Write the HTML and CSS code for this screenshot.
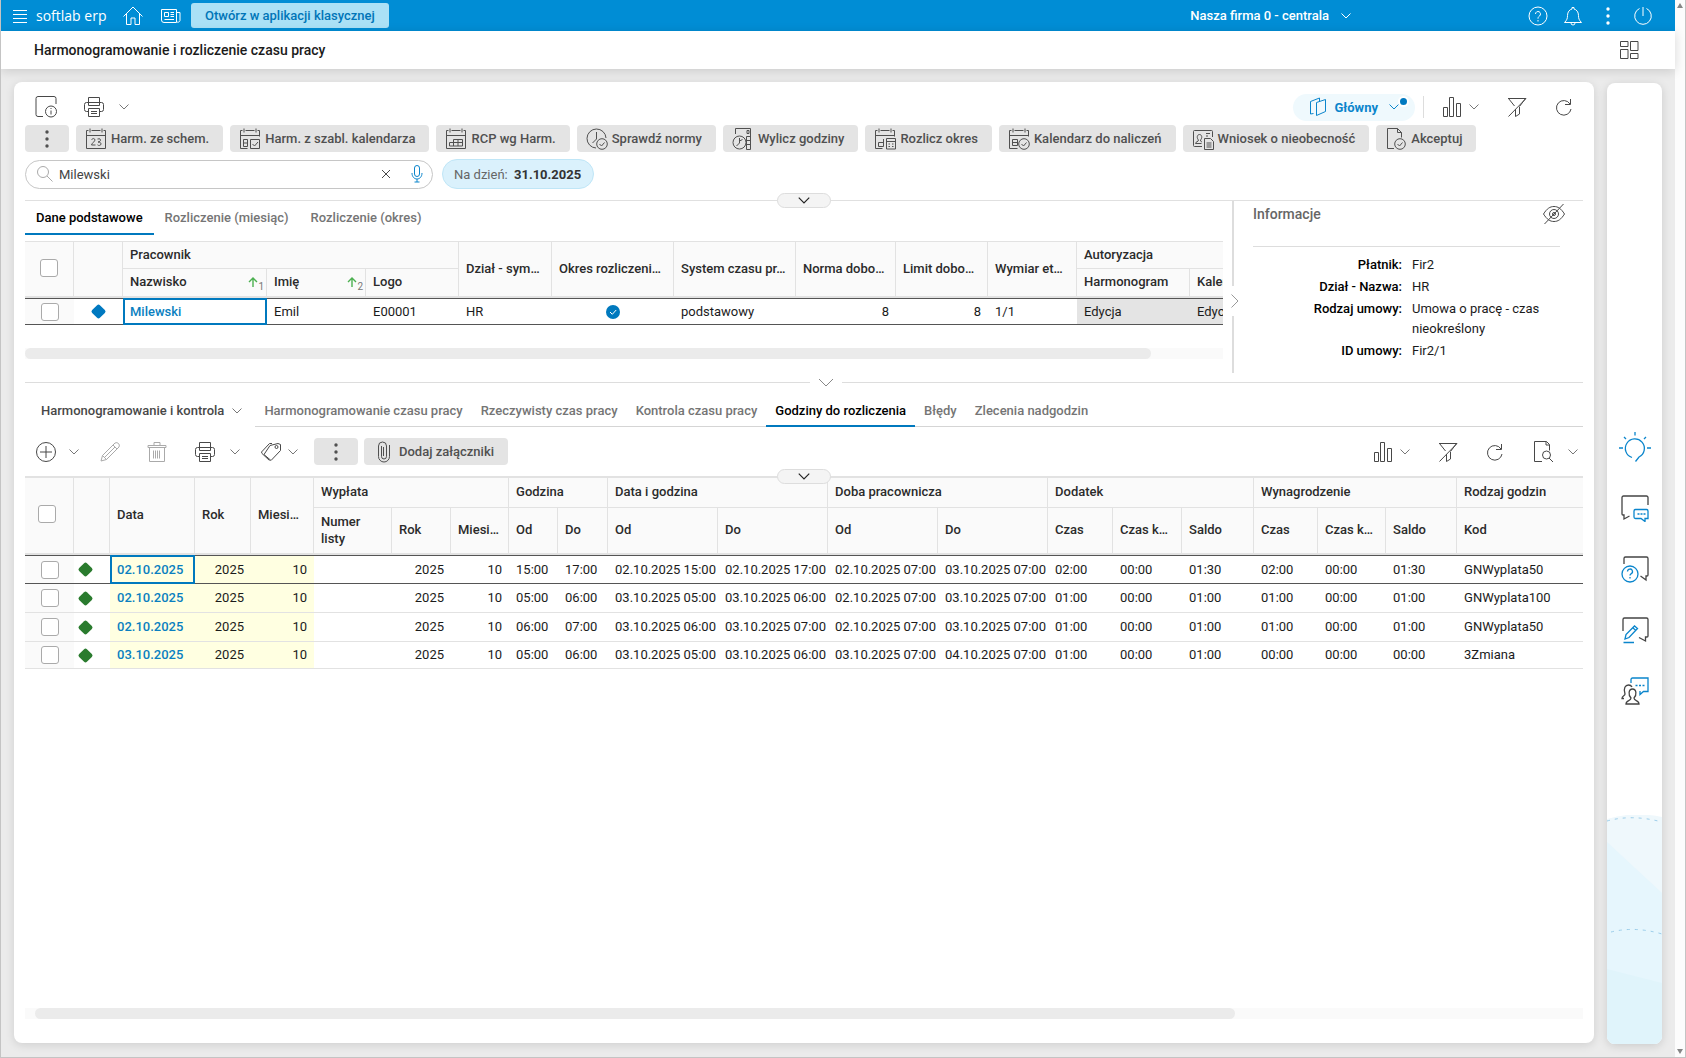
FILE: index.html
```html
<!DOCTYPE html>
<html lang="pl">
<head>
  <meta charset="UTF-8">
  <meta name="viewport" content="width=device-width, initial-scale=1.0">
  <title>Harmonogramowanie i rozliczenie czasu pracy</title>
  <link rel="stylesheet" href="styles.css">
</head>
<body>
  <svg class="sprite" aria-hidden="true">
    <symbol id="chevron" viewBox="0 0 10 6"><path d="M.5 .5 5 5 9.5 .5"/></symbol>
    <symbol id="printer" viewBox="0 0 22 22"><path d="M5.5 6.5v-5h11v5M5.5 15.5h-2a2 2 0 0 1-2-2v-5a2 2 0 0 1 2-2h15a2 2 0 0 1 2 2v5a2 2 0 0 1-2 2h-2M5.5 6.5v3h11v-3M5.5 12.5h11v8h-11zM8 15.5h6M8 17.5h6"/></symbol>
    <symbol id="bars" viewBox="0 0 20 20"><path d="M1.5 10.5h4v9h-4zM7.5 .5h4v19h-4zM14.5 6.5h4v13h-4z"/></symbol>
    <symbol id="filter-off" viewBox="0 0 20 20"><path d="M1 1.5h18L1.5 19.5M1.5 1.5l6 7.5M18.5 1.5l-6 8M8.5 12v7.5l4-2.5v-7"/></symbol>
    <symbol id="refresh" viewBox="0 0 18 18"><path d="M15.5 1v5.5H10M15 6A7.3 7.3 0 1 0 16 11"/></symbol>
    <symbol id="cal" viewBox="0 0 22 22"><path d="M1.5 7.5h19M3.5 2.5h-2v18M6.5 2.5h9M18.5 2.5h2v6M5 .5v4M17 .5v4"/></symbol>
    <symbol id="dots" viewBox="0 0 4 18"><circle cx="2" cy="2" r="1.7"/><circle cx="2" cy="9" r="1.7"/><circle cx="2" cy="16" r="1.7"/></symbol>
  </svg>

  <div class="app">
    <header class="topbar">
      <button class="bare" aria-label="Menu"><svg class="i-menu" viewBox="0 0 14 14"><path d="M0 1.5h14M0 5.5h14M0 9.5h14M0 13.5h14"/></svg></button>
      <a class="brand" href="#">softlab erp</a>
      <a class="home" href="#" aria-label="Start"><svg class="i20" viewBox="0 0 20 20"><path d="M.5 10.5 10 1l9.5 9.5M3.5 8v10.5H8v-6.5h4v6.5h4.5V8"/></svg></a>
      <a class="news" href="#" aria-label="Aktualności"><svg class="i20" viewBox="0 0 20 20"><path d="M.5 3.5h15v13H3a2.5 2.5 0 0 1-2.5-2.5zM15.5 6.5h3.5v8a2 2 0 0 1-3.5 1M3.5 6.5h4v4h-4zM9.5 6.5H13M9.5 8.5H13M9.5 10.5H13M3.5 13.5H13"/></svg></a>
      <button class="classic">Otwórz w aplikacji klasycznej</button>
      <button class="bare company">Nasza firma 0 - centrala <svg class="chev"><use href="#chevron"/></svg></button>
      <div class="topbar-icons">
        <button class="bare" aria-label="Pomoc"><svg class="i20" viewBox="0 0 20 20"><circle cx="10" cy="10" r="9"/><path d="M7.5 8a2.5 2.5 0 1 1 4 2c-1 .8-1.5 1.2-1.5 2.7M10 14v1.5"/></svg></button>
        <button class="bare" aria-label="Powiadomienia"><svg class="i20" viewBox="0 0 20 20"><path d="M1.5 16.5h17c-2.500-2.500-3-4-3-7C15.5 6 13.5 3.5 11 3V1.5H9V3C6.5 3.5 4.5 6 4.5 9.5c0 3-.5 4.500-3 7zM8 17a2 2 0 0 0 4 0"/></svg></button>
        <button class="bare" aria-label="Więcej"><svg class="i-dots"><use href="#dots"/></svg></button>
        <button class="bare" aria-label="Wyloguj"><svg class="i20" viewBox="0 0 20 20"><path d="M10 1v9M6.5 2.5a8.3 8.3 0 1 0 7 0"/></svg></button>
      </div>
    </header>

    <div class="titlebar">
      <h1>Harmonogramowanie i rozliczenie czasu pracy</h1>
      <button class="bare" aria-label="Układ"><svg class="i20" viewBox="0 0 20 20"><path d="M1.5 1.5h7.5v5H1.5zM1.5 9.5h7.5v9H1.5zM11.5 1.5h7.5v9h-7.5zM11.5 13.5h7.5v5h-7.5z"/></svg></button>
    </div>

    <div class="workspace">
      <main class="panel">
        <div class="toolbar main-tools">
          <button class="bare" aria-label="Informacje"><svg class="i22" viewBox="0 0 22 22"><path d="M8 20.5H3a2 2 0 0 1-2-2v-16a2 2 0 0 1 2-2h16a2 2 0 0 1 2 2V8"/><circle cx="16" cy="15.5" r="5.5"/><path d="M16 14.5v4M16 12v1"/></svg></button>
          <button class="bare split" aria-label="Drukuj"><svg class="i22"><use href="#printer"/></svg><svg class="chev"><use href="#chevron"/></svg></button>
          <div class="tools-right">
            <button class="view-pill"><svg class="i-map" viewBox="0 0 18 20"><path d="M7.5 5.5 16.5 2.5v12l-9 4zM4.5 16.5l-3 .5V4.5L10.5 1v3"/></svg>Główny<svg class="chev"><use href="#chevron"/></svg><span class="badge"></span></button>
            <span class="vline"></span>
            <button class="bare bars" aria-label="Wykres"><svg class="i20"><use href="#bars"/></svg><svg class="chev"><use href="#chevron"/></svg></button>
            <button class="bare" aria-label="Wyczyść filtr"><svg class="i20"><use href="#filter-off"/></svg></button>
            <button class="bare" aria-label="Odśwież"><svg class="i18"><use href="#refresh"/></svg></button>
          </div>
        </div>

        <div class="actions">
          <button class="action more" aria-label="Więcej"><svg class="i-dots"><use href="#dots"/></svg></button>
          <button class="action"><svg class="i22" viewBox="0 0 22 22"><use href="#cal"/><path d="M1.5 20.5h19v-13"/><path d="M6.5 11.5q2-2 3.5 0c.5 1.5-3.5 4-3.5 5.5H10.5M12.5 11q3-1 3 1c0 1-1 2-2.5 2 2 0 3 .7 3 2 0 1.5-2.5 2-3.5 .8"/></svg>Harm. ze schem.</button>
          <button class="action"><svg class="i22" viewBox="0 0 22 22"><use href="#cal"/><path d="M1.5 20.5h7M4.5 11.5h4v7h-4zM4.5 15h4M11.5 11.5h9v9h-9zM13.5 16l2 2 3.5-4"/></svg>Harm. z szabl. kalendarza</button>
          <button class="action"><svg class="i22" viewBox="0 0 22 22"><use href="#cal"/><path d="M1.5 20.5h19v-13M4.5 14.5h13v3.5h-13zM8.5 11.5v6.5M8.5 11.5h9v6.5M13 11.5v6.5"/></svg>RCP wg Harm.</button>
          <button class="action"><svg class="i22" viewBox="0 0 22 22"><path d="M10 20A9.5 9.5 0 1 1 20 10M10.5 4v7l-4 4"/><circle cx="16" cy="16" r="5.3"/><path d="m13.5 16 2 2 3-3.5"/></svg>Sprawdź normy</button>
          <button class="action"><svg class="i22" viewBox="0 0 22 22"><path d="M3.5 6V.5h15v21h-4M14.5 8.5v13M14.5 8.5h4M14.5 12.5h4M14.5 16.5h4M15 2.5h2v3h-2z"/><circle cx="7.5" cy="14.5" r="6.5"/><path d="M7.5 10v5l-3 3M7.5 13l3-1.5"/></svg>Wylicz godziny</button>
          <button class="action"><svg class="i22" viewBox="0 0 22 22"><use href="#cal"/><path d="M1.5 20.5h7M9.5 11v7.5h-5v-4h5M12.5 10.5h9v10.5h-9zM12.5 13.5h9M14.5 16h1.5M18 16h1.5M14.5 18.5h1.5M18 18.5h1.5"/></svg>Rozlicz okres</button>
          <button class="action"><svg class="i22" viewBox="0 0 22 22"><use href="#cal"/><path d="M1.5 20.5h8M4.5 11.5h5v6h-5zM4.5 14.5h5"/><circle cx="16" cy="16" r="5.3"/><path d="m13.5 16 2 2 3-3.5"/></svg>Kalendarz do naliczeń</button>
          <button class="action"><svg class="i22" viewBox="0 0 22 22"><path d="M10 18.5H2.5a1 1 0 0 1-1-1v-14a1 1 0 0 1 1-1h17a1 1 0 0 1 1 1V9M14 5.5h4M14 8h2M3.5 15.5c0-2 3-1.5 3-3.5-2-2-1.500-5.500 1-5.500s3 3.500 1 5.500c0 2 1 1.500 1.500 2M3.5 15.5h6M12.5 10.5h6l3 3v8h-9zM14.5 15h5M14.5 17h5M14.5 19h5"/></svg>Wniosek o nieobecność</button>
          <button class="action"><svg class="i22" viewBox="0 0 22 22"><path d="M9 20.5H2.5V.5h10l4 4v5M12.5 .5v4h4"/><circle cx="15" cy="16" r="5.3"/><path d="m12.5 16 2 2 3-3.5"/></svg>Akceptuj</button>
        </div>

        <div class="filters">
          <div class="search">
            <svg class="i18 lens" viewBox="0 0 18 18"><circle cx="7" cy="7" r="5.5"/><path d="m11 11 5.5 5.5"/></svg>
            <input type="text" value="Milewski" aria-label="Szukaj">
            <button class="bare" aria-label="Wyczyść"><svg class="i10" viewBox="0 0 10 10"><path d="m1 1 8 8M9 1 1 9"/></svg></button>
            <button class="bare mic" aria-label="Dyktuj"><svg class="i-mic" viewBox="0 0 12 18"><rect x="3.5" y=".5" width="5" height="11" rx="2.5"/><path d="M1 8c0 8 10 8 10 0M6 14v3M3.5 17h5"/></svg></button>
          </div>
          <button class="date-chip">Na dzień: <b>31.10.2025</b></button>
        </div>

        <div class="handle-line"><button class="handle" aria-label="Zwiń"><svg class="chev"><use href="#chevron"/></svg></button></div>

        <section class="upper">
          <div class="upper-left">
            <nav class="tabs">
              <a class="active" href="#">Dane podstawowe</a>
              <a href="#">Rozliczenie (miesiąc)</a>
              <a href="#">Rozliczenie (okres)</a>
            </nav>
            <div class="grid-wrap">
              <table class="grid people">
                <colgroup>
                  <col class="w49"><col class="w49"><col class="w144"><col class="w99"><col class="w93"><col class="w93"><col class="w122"><col class="w122"><col class="w100"><col class="w92"><col class="w89"><col class="w113"><col>
                </colgroup>
                <thead>
                  <tr>
                    <th rowspan="2" class="check"><input type="checkbox" aria-label="Zaznacz wszystkie"></th>
                    <th rowspan="2"></th>
                    <th colspan="3">Pracownik</th>
                    <th rowspan="2">Dział - sym…</th>
                    <th rowspan="2">Okres rozliczeni…</th>
                    <th rowspan="2">System czasu pr…</th>
                    <th rowspan="2">Norma dobo…</th>
                    <th rowspan="2">Limit dobo…</th>
                    <th rowspan="2">Wymiar et…</th>
                    <th colspan="2">Autoryzacja</th>
                  </tr>
                  <tr>
                    <th><span class="sorted">Nazwisko <span class="sort"><svg class="i-up" viewBox="0 0 10 10"><path d="M5 10V1M1 5l4-4 4 4"/></svg><sub>1</sub></span></span></th>
                    <th><span class="sorted">Imię <span class="sort"><svg class="i-up" viewBox="0 0 10 10"><path d="M5 10V1M1 5l4-4 4 4"/></svg><sub>2</sub></span></span></th>
                    <th>Logo</th>
                    <th>Harmonogram</th>
                    <th class="cut">Kalendarz</th>
                  </tr>
                </thead>
                <tbody>
                  <tr class="current">
                    <td class="check"><input type="checkbox" aria-label="Milewski"></td>
                    <td class="mark"><i class="diamond blue"></i></td>
                    <td class="key focus">Milewski</td>
                    <td>Emil</td>
                    <td>E00001</td>
                    <td>HR</td>
                    <td class="mark"><svg class="i-ok" viewBox="0 0 14 14"><circle cx="7" cy="7" r="7"/><path d="m4 7 2.3 2.3L10.2 5"/></svg></td>
                    <td>podstawowy</td>
                    <td class="num">8</td>
                    <td class="num">8</td>
                    <td>1/1</td>
                    <td class="locked">Edycja</td>
                    <td class="locked cut">Edycja</td>
                  </tr>
                </tbody>
              </table>
            </div>
            <div class="scroll"><div class="thumb thumb-upper"></div></div>
          </div>

          <div class="vsplit"><span class="above"></span><svg viewBox="0 0 8 14"><path d="m.5 .5 6.5 6.5-6.5 6.5"/></svg><span class="below"></span></div>

          <aside class="info">
            <div class="info-head">
              <h2>Informacje</h2>
              <button class="bare" aria-label="Ukryj"><svg class="i22" viewBox="0 0 22 22"><path d="M.5 11C4 5.5 7 3.5 11 3.5s7 2 10.5 7.5C18 16.5 15 18.5 11 18.5S4 16.5 .5 11zM1.5 21 20.5 1"/><circle cx="11" cy="11" r="4.5"/><circle cx="11" cy="11" r="1.5"/></svg></button>
            </div>
            <dl>
              <dt>Płatnik:</dt><dd>Fir2</dd>
              <dt>Dział - Nazwa:</dt><dd>HR</dd>
              <dt>Rodzaj umowy:</dt><dd>Umowa o pracę - czas nieokreślony</dd>
              <dt>ID umowy:</dt><dd>Fir2/1</dd>
            </dl>
          </aside>
        </section>

        <div class="hsplit"><span class="before"></span><svg viewBox="0 0 16 9"><path d="m1 1 7 7 7-7"/></svg><span class="after"></span></div>

        <div class="lower-nav">
          <button class="bare group">Harmonogramowanie i kontrola <svg class="chev"><use href="#chevron"/></svg></button>
          <nav class="tabs lower-tabs">
            <a href="#">Harmonogramowanie czasu pracy</a>
            <a href="#">Rzeczywisty czas pracy</a>
            <a href="#">Kontrola czasu pracy</a>
            <a class="active" href="#">Godziny do rozliczenia</a>
            <a href="#">Błędy</a>
            <a href="#">Zlecenia nadgodzin</a>
          </nav>
        </div>

        <div class="toolbar lower-tools">
          <button class="bare add" aria-label="Dodaj"><svg class="i22" viewBox="0 0 22 22"><circle cx="11" cy="11" r="9.5"/><path d="M11 5v12M5 11h12"/></svg><svg class="chev"><use href="#chevron"/></svg></button>
          <button class="bare off" aria-label="Edytuj" disabled><svg class="i20" viewBox="0 0 20 20"><path d="M1 19l1.5-5.5L15 1q2-1 3.5 .5T19 5L6.5 17.5zM2.5 13.5l4 4M13 3l4 4M4.5 15.5 15 5"/></svg></button>
          <button class="bare off" aria-label="Usuń" disabled><svg class="i22" viewBox="0 0 22 22"><path d="M2 4.5h18v2H2zM8 4.5v-3h6v3M3.5 6.5v14h15v-14M7.5 9.5v8M9.5 9.5v8M11.5 9.5v8M13.5 9.5v8"/></svg></button>
          <button class="bare split" aria-label="Drukuj"><svg class="i22"><use href="#printer"/></svg><svg class="chev"><use href="#chevron"/></svg></button>
          <button class="bare tag" aria-label="Etykiety"><svg class="i20" viewBox="0 0 20 20"><path d="M9 3.5 17 1.5l2.5 1v6L10 18.5 3 12.5zM11 1.5H8.5L.5 10l.5 1.5 7.5 7"/><circle cx="15.5" cy="5" r="1.5"/></svg><svg class="chev"><use href="#chevron"/></svg></button>
          <button class="action more" aria-label="Więcej"><svg class="i-dots"><use href="#dots"/></svg></button>
          <button class="action attach"><svg class="i-clip" viewBox="0 0 14 22"><path d="M4.5 5v10.5a2.5 2.5 0 0 0 5 0V5a4 4 0 0 0-4-4 4 4 0 0 0-4 4v10.5a5.5 5.5 0 0 0 11 0V4M6.5 6v9"/></svg>Dodaj załączniki</button>
          <div class="tools-right">
            <button class="bare bars" aria-label="Wykres"><svg class="i20"><use href="#bars"/></svg><svg class="chev"><use href="#chevron"/></svg></button>
            <button class="bare" aria-label="Wyczyść filtr"><svg class="i20"><use href="#filter-off"/></svg></button>
            <button class="bare" aria-label="Odśwież"><svg class="i18"><use href="#refresh"/></svg></button>
            <button class="bare split" aria-label="Podgląd"><svg class="i22" viewBox="0 0 22 22"><path d="M10 20.5H2.5V.5h12l3 3v6M14 .5v3.5h3.5"/><circle cx="14.5" cy="14" r="4"/><path d="m17 17 4 4"/></svg><svg class="chev"><use href="#chevron"/></svg></button>
          </div>
        </div>

        <div class="grid-wrap hours-wrap">
          <button class="handle" aria-label="Zwiń"><svg class="chev"><use href="#chevron"/></svg></button>
          <table class="grid hours">
            <colgroup>
              <col class="w49"><col class="w36"><col class="w85"><col class="w56"><col class="w63"><col class="w78"><col class="w59"><col class="w58"><col class="w49"><col class="w50"><col class="w110"><col class="w110"><col class="w110"><col class="w110"><col class="w65"><col class="w69"><col class="w72"><col class="w64"><col class="w68"><col class="w71"><col>
            </colgroup>
            <thead>
              <tr>
                <th rowspan="2" class="check"><input type="checkbox" aria-label="Zaznacz wszystkie"></th>
                <th rowspan="2"></th>
                <th rowspan="2">Data</th>
                <th rowspan="2">Rok</th>
                <th rowspan="2">Miesi…</th>
                <th colspan="3">Wypłata</th>
                <th colspan="2">Godzina</th>
                <th colspan="2">Data i godzina</th>
                <th colspan="2">Doba pracownicza</th>
                <th colspan="3">Dodatek</th>
                <th colspan="3">Wynagrodzenie</th>
                <th>Rodzaj godzin</th>
              </tr>
              <tr>
                <th class="wrap">Numer listy</th><th>Rok</th><th>Miesi…</th>
                <th>Od</th><th>Do</th><th>Od</th><th>Do</th><th>Od</th><th>Do</th>
                <th>Czas</th><th>Czas k…</th><th>Saldo</th>
                <th>Czas</th><th>Czas k…</th><th>Saldo</th>
                <th>Kod</th>
              </tr>
            </thead>
            <tbody>
              <tr class="current">
                <td class="check"><input type="checkbox" aria-label="Wiersz 1"></td><td class="mark"><i class="diamond"></i></td>
                <td class="key yellow focus">02.10.2025</td><td class="num yellow">2025</td><td class="num yellow">10</td>
                <td></td><td class="num">2025</td><td class="num">10</td><td>15:00</td><td>17:00</td>
                <td>02.10.2025 15:00</td><td>02.10.2025 17:00</td><td>02.10.2025 07:00</td><td>03.10.2025 07:00</td>
                <td>02:00</td><td>00:00</td><td>01:30</td><td>02:00</td><td>00:00</td><td>01:30</td><td>GNWyplata50</td>
              </tr>
              <tr>
                <td class="check"><input type="checkbox" aria-label="Wiersz 2"></td><td class="mark"><i class="diamond"></i></td>
                <td class="key yellow">02.10.2025</td><td class="num yellow">2025</td><td class="num yellow">10</td>
                <td></td><td class="num">2025</td><td class="num">10</td><td>05:00</td><td>06:00</td>
                <td>03.10.2025 05:00</td><td>03.10.2025 06:00</td><td>02.10.2025 07:00</td><td>03.10.2025 07:00</td>
                <td>01:00</td><td>00:00</td><td>01:00</td><td>01:00</td><td>00:00</td><td>01:00</td><td>GNWyplata100</td>
              </tr>
              <tr>
                <td class="check"><input type="checkbox" aria-label="Wiersz 3"></td><td class="mark"><i class="diamond"></i></td>
                <td class="key yellow">02.10.2025</td><td class="num yellow">2025</td><td class="num yellow">10</td>
                <td></td><td class="num">2025</td><td class="num">10</td><td>06:00</td><td>07:00</td>
                <td>03.10.2025 06:00</td><td>03.10.2025 07:00</td><td>02.10.2025 07:00</td><td>03.10.2025 07:00</td>
                <td>01:00</td><td>00:00</td><td>01:00</td><td>01:00</td><td>00:00</td><td>01:00</td><td>GNWyplata50</td>
              </tr>
              <tr>
                <td class="check"><input type="checkbox" aria-label="Wiersz 4"></td><td class="mark"><i class="diamond"></i></td>
                <td class="key yellow">03.10.2025</td><td class="num yellow">2025</td><td class="num yellow">10</td>
                <td></td><td class="num">2025</td><td class="num">10</td><td>05:00</td><td>06:00</td>
                <td>03.10.2025 05:00</td><td>03.10.2025 06:00</td><td>03.10.2025 07:00</td><td>04.10.2025 07:00</td>
                <td>01:00</td><td>00:00</td><td>01:00</td><td>00:00</td><td>00:00</td><td>00:00</td><td>3Zmiana</td>
              </tr>
            </tbody>
          </table>
        </div>
        <div class="scroll bottom-scroll"><div class="thumb thumb-lower"></div></div>
      </main>

      <aside class="side">
        <nav class="side-icons">
          <a href="#" aria-label="Wskazówki"><svg class="i32 blue-line" viewBox="0 0 32 32"><path d="M13 26.5A9.5 9.5 0 1 1 20 26L16.5 30.5M16 1v3.5M5 6l2 2M27 6l-2 2M0 17h4M28 17h4"/></svg></a>
          <a href="#" aria-label="Czat"><svg class="i28" viewBox="0 0 28 28"><path d="M27 11V3.5a1.5 1.5 0 0 0-1.5-1.5H2.5A1.5 1.5 0 0 0 1 3.5V20a1 1 0 0 0 1 1h1v4l5.5-3"/><path class="blue-line" d="M14.5 15.5h11a1.5 1.5 0 0 1 1.5 1.5v7.5h-3v3l-4-3h-5.5a1.5 1.5 0 0 1-1.5-1.5v-6a1.5 1.5 0 0 1 1.5-1.5zM16.5 20h2M19.5 20h2M22.5 20h2"/></svg></a>
          <a href="#" aria-label="Pytania"><svg class="i28" viewBox="0 0 28 28"><path d="M3 9V3.5A1.5 1.5 0 0 1 4.5 2h21A1.5 1.5 0 0 1 27 3.5V20a1 1 0 0 1-1 1h-1v4l-5.5-4"/><g class="blue-line"><circle cx="9" cy="19" r="8"/><path d="M6.5 16.5a2.5 2.5 0 1 1 3.5 2.3c-.8 .4-1 .8-1 1.8M9 22v1.5"/></g></svg></a>
          <a href="#" aria-label="Notatki"><svg class="i28" viewBox="0 0 28 28"><path d="M2 15V3.5A1.5 1.5 0 0 1 3.5 2h22A1.5 1.5 0 0 1 27 3.5V20a1 1 0 0 1-1 1h-1.5v4L18 21.5"/><path class="blue-line" d="M2.5 26.5H13M4 23l1-4.5 8.5-8.5 3 2.5L8 21.5zM12 12l3 2.5"/></svg></a>
          <a href="#" aria-label="Zespół"><svg class="i28" viewBox="0 0 28 28"><path d="M5 27c0-4.5 5-2.5 5-6-3-3-2.5-9 1.5-9s4.5 6 1.5 9c0 3.5 5 1.5 5 6zM3 21.5H1c0-3 3-2.5 3-4.5-2-6 .5-9 3.5-9 2 0 3 1 3.5 2"/><path class="blue-line" d="M10 6V2.5A1.5 1.5 0 0 1 11.5 1h15.5v13.5h-4.5l-3.5 3v-3.5M14.5 8.5h2M18 8.5h2M21.5 8.5h2"/></svg></a>
        </nav>
        <svg class="side-art" viewBox="0 0 55 229" aria-hidden="true">
          <path fill="#eff8fc" d="M0 4Q27 -4 55 2V229H0z"/>
          <path fill="#e6f6fd" d="M0 27 55 78V229H0z"/>
          <path fill="#e0f4fb" d="M0 154 55 168V229H0z"/>
          <path class="dash" d="M0 6Q25 -1 55 7M4 117Q28 111 55 119"/>
        </svg>
      </aside>
    </div>
  </div>
  <div class="page-scroll"><i class="up"></i><i class="down"></i></div>
</body>
</html>
```

FILE: styles.css
```css
* {
  box-sizing: border-box;
}
body {
  margin: 0;
  display: flex;
  min-height: 100vh;
  background-color: #fcfcfc;
  border: 1px solid #c4c4c4;
  border-top: none;
  font-family: Roboto, "Liberation Sans", sans-serif;
  font-size: 13px;
  color: #1b1b1b;
}
a {
  color: inherit;
  text-decoration: none;
}
h1, h2, dl, dd {
  margin: 0;
}
button {
  font-family: inherit;
  font-size: 13px;
  cursor: pointer;
}
svg {
  display: block;
  flex: none;
  fill: none;
  stroke: currentColor;
  stroke-width: 1;
}
.sprite {
  position: absolute;
  width: 0;
  height: 0;
}
.bare {
  display: flex;
  align-items: center;
  padding: 0;
  border: none;
  background: none;
  color: #484848;
}
.i10 { width: 10px; height: 10px; }
.i18 { width: 18px; height: 18px; }
.i20 { width: 20px; height: 20px; }
.i22 { width: 22px; height: 22px; }
.i28 { width: 28px; height: 28px; }
.i32 { width: 32px; height: 32px; }
.chev { width: 10px; height: 6px; }
.i-dots {
  width: 4px;
  height: 18px;
  fill: currentColor;
  stroke: none;
}

/* frame */
.app {
  flex: 1;
  min-width: 0;
  display: flex;
  flex-direction: column;
  background-color: #ebebeb;
}
.page-scroll {
  display: flex;
  flex-direction: column;
  justify-content: space-between;
  align-items: center;
  width: 10px;
  padding: 3px 0;
}
.page-scroll i {
  border: 3px solid transparent;
}
.page-scroll .up {
  border-top: none;
  border-bottom: 5px solid #868686;
}
.page-scroll .down {
  border-bottom: none;
  border-top: 5px solid #868686;
}

/* top bar */
.topbar {
  display: flex;
  align-items: center;
  height: 31px;
  padding: 0 22px 0 12px;
  background-color: #008dd5;
  color: #fff;
}
.topbar .bare {
  color: #fff;
}
.i-menu {
  width: 14px;
  height: 14px;
}
.brand {
  margin-left: 9px;
  width: 87px;
  font-family: "Open Sans", sans-serif;
  font-size: 14px;
}
.news {
  margin: 0 10px 0 18px;
}
.classic {
  height: 25px;
  padding: 0 14px;
  border: none;
  border-radius: 3px;
  background-color: #abe1f6;
  color: #0075b8;
  font-weight: 500;
}
.company {
  margin-left: auto;
  gap: 12px;
  font-weight: 500;
}
.topbar-icons {
  display: flex;
  justify-content: space-between;
  align-items: center;
  width: 125px;
  margin-left: 177px;
}
.topbar-icons .bare {
  justify-content: center;
  width: 20px;
}

.titlebar {
  position: relative;
  display: flex;
  justify-content: space-between;
  align-items: center;
  height: 38px;
  padding: 0 36px 0 33px;
  background-color: #fff;
  box-shadow: 0 2px 10px rgba(0, 0, 0, 0.14);
}
.titlebar h1 {
  font-size: 14px;
  font-weight: 500;
}

/* workspace */
.workspace {
  flex: 1;
  display: flex;
  gap: 13px;
  padding: 13px 13px 14px;
}
.panel {
  flex: 1;
  min-width: 0;
  display: flex;
  flex-direction: column;
  padding: 11px;
  border-radius: 8px;
  background-color: #fff;
  box-shadow: 0 2px 10px rgba(0, 0, 0, 0.12);
}
.toolbar {
  display: flex;
  align-items: center;
}
.toolbar .chev, .group .chev {
  color: #777;
}
.main-tools {
  height: 28px;
  padding: 0 10px;
  gap: 26px;
}
.split {
  gap: 14px;
}
.bars {
  gap: 7px;
}
.tools-right {
  display: flex;
  align-items: center;
  gap: 28px;
  margin-left: auto;
}
.toolbar .view-pill {
  position: relative;
  display: flex;
  align-items: center;
  height: 27px;
  padding: 0 16px;
  gap: 7px;
  border: none;
  border-radius: 14px;
  background-color: #eff9fd;
  color: #0a85cc;
  font-weight: 700;
}
.toolbar .view-pill .chev {
  margin-left: 4px;
  color: #0a85cc;
}
.i-map {
  width: 18px;
  height: 20px;
}
.badge {
  position: absolute;
  top: 2px;
  right: 6px;
  width: 11px;
  height: 11px;
  border: 2px solid #fff;
  border-radius: 50%;
  background-color: #0079c0;
}
.vline {
  width: 1px;
  height: 22px;
  margin: 0 -10px 0 -20px;
  background-color: #ddd;
}

.actions {
  display: flex;
  gap: 7px;
  margin-top: 4px;
}
.action {
  display: flex;
  align-items: center;
  gap: 4px;
  height: 27px;
  padding: 0 14px 0 9px;
  border: none;
  border-radius: 4px;
  background-color: #e4e4e4;
  color: #505050;
  font-weight: 500;
  white-space: nowrap;
}
.more {
  justify-content: center;
  width: 44px;
  padding: 0;
}

.filters {
  display: flex;
  align-items: center;
  gap: 9px;
  margin-top: 7px;
}
.search {
  display: flex;
  align-items: center;
  width: 408px;
  height: 29px;
  padding: 0 9px 0 10px;
  border: 1px solid #c6c6c6;
  border-radius: 15px;
}
.lens {
  color: #aaa;
}
.search input {
  flex: 1;
  min-width: 0;
  padding: 0 0 0 5px;
  border: none;
  outline: none;
  background: none;
  color: #444;
  font-family: inherit;
  font-size: 13px;
}
.mic {
  margin-left: 20px;
  color: #0a85cc;
}
.i-mic {
  width: 12px;
  height: 18px;
}
.date-chip {
  height: 30px;
  padding: 0 12px 0 11px;
  border: 1px solid #bfe6f7;
  border-radius: 15px;
  background-color: #daf1fc;
  color: #666;
}
.date-chip b {
  margin-left: 3px;
  font-weight: 700;
  color: #333;
}

/* collapse handle over a line */
.handle-line {
  position: relative;
  margin-top: 11px;
  border-top: 1px solid #e0e0e0;
}
.handle {
  position: absolute;
  left: 50%;
  top: -8px;
  z-index: 1;
  display: flex;
  align-items: center;
  justify-content: center;
  width: 54px;
  height: 15px;
  padding: 0;
  transform: translateX(-50%);
  border: 1px solid #ddd;
  border-radius: 8px;
  background-color: #f4f4f4;
  color: #222;
}
.handle .chev {
  width: 12px;
  height: 7px;
}

/* upper part */
.upper {
  display: flex;
  height: 172px;
}
.upper-left {
  flex: 1;
  min-width: 0;
}
.tabs {
  display: flex;
  color: #757575;
  font-weight: 500;
}
.tabs a {
  height: 34px;
  padding: 0 11px;
  line-height: 33px;
  border-bottom: 2px solid transparent;
}
.tabs .active {
  border-bottom-color: #0079be;
  color: #000;
}
.grid-wrap {
  margin-top: 6px;
  overflow: hidden;
}

.grid {
  width: 100%;
  table-layout: fixed;
  border-spacing: 0;
  border-top: 1px solid #e2e2e2;
}
.grid th, .grid td {
  padding: 0 6px 0 7px;
  overflow: hidden;
  text-align: left;
  text-overflow: ellipsis;
  white-space: nowrap;
}
.grid th {
  padding: 0 4px 2px 7px;
  background-color: #fafafa;
  border-right: 1px solid #e2e2e2;
  border-bottom: 1px solid #e2e2e2;
  color: #2b2b2b;
  font-weight: 500;
}
.grid th:last-child {
  border-right: none;
}
.grid th[rowspan], .grid tr:nth-child(2) th {
  border-bottom-width: 2px;
}
.grid td {
  height: 29px;
  border-bottom: 1px solid #e2e2e2;
  line-height: 16px;
}
.grid th.wrap {
  padding-right: 24px;
  line-height: 17px;
  white-space: normal;
}
.grid .current td {
  border-top: 1px solid #555;
  border-bottom: 1px solid #555;
}
.grid .num {
  padding-right: 7px;
  text-align: right;
}
.grid .cut {
  text-overflow: clip;
}
.grid .check {
  padding: 0;
  text-align: center;
}
.grid th.check {
  padding-bottom: 3px;
}
.grid td.check {
  background-color: #fafafa;
}
.grid .mark {
  padding: 0;
}
.grid .mark svg {
  margin: 0 auto;
}
.grid .key {
  color: #0a7fc0;
  font-weight: 500;
}
.grid .yellow {
  background-color: #ffffe1;
}
.grid .locked {
  background-color: #e4e4e4;
}
.grid .current .focus {
  border: 1px solid #0079be;
  padding-left: 6px;
  box-shadow: inset 0 0 0 1px #0079be;
}
.grid input {
  display: inline-block;
  width: 18px;
  height: 18px;
  margin: 0;
  vertical-align: middle;
  appearance: none;
  border: 1px solid #aaa;
  border-radius: 3px;
  background-color: #fff;
}
.diamond {
  display: block;
  width: 11px;
  height: 11px;
  margin: 0 auto;
  border-radius: 2px;
  background-color: #2a7b2e;
  transform: rotate(45deg);
}
.blue {
  background-color: #0079c0;
}
.i-ok {
  width: 14px;
  height: 14px;
}
.i-ok circle {
  fill: #0079be;
  stroke: none;
}
.i-ok path {
  stroke: #fff;
}
.sorted, .sort {
  display: flex;
  align-items: center;
}
.sorted {
  justify-content: space-between;
  margin-right: -2px;
}
.sort sub {
  font-size: 10px;
  font-weight: 400;
  line-height: 1;
  color: #777;
  vertical-align: baseline;
  padding-top: 10px;
}
.i-up {
  width: 10px;
  height: 10px;
  color: #4cb050;
  stroke-width: 1.4;
}

.people tr:first-child th { height: 27px; }
.people tr:nth-child(2) th { height: 29px; }
.people tbody td { height: 27px; }
.hours { border-top-width: 2px; }
.hours tr:first-child th { height: 30px; }
.hours tr:nth-child(2) th { height: 47px; }
.hours th.check { padding-right: 4px; }
.hours tr:last-child td { height: 27px; }
.hours td { padding-right: 0; }
.hours .diamond { margin-left: 6px; }

.w36 { width: 36px; }
.w49 { width: 49px; }
.w50 { width: 50px; }
.w56 { width: 56px; }
.w58 { width: 58px; }
.w59 { width: 59px; }
.w63 { width: 63px; }
.w64 { width: 64px; }
.w65 { width: 65px; }
.w68 { width: 68px; }
.w69 { width: 69px; }
.w71 { width: 71px; }
.w72 { width: 72px; }
.w78 { width: 78px; }
.w85 { width: 85px; }
.w89 { width: 89px; }
.w92 { width: 92px; }
.w93 { width: 93px; }
.w99 { width: 99px; }
.w100 { width: 100px; }
.w110 { width: 110px; }
.w113 { width: 113px; }
.w122 { width: 122px; }
.w144 { width: 144px; }

.scroll {
  height: 11px;
  margin-top: 23px;
  background-color: #fafafa;
}
.thumb {
  height: 11px;
  border-radius: 6px;
  background-color: #ebebeb;
}
.thumb-upper {
  width: 94%;
}
.thumb-lower {
  width: 77%;
  margin-left: 10px;
}

/* splitters */
.vsplit {
  display: flex;
  flex-direction: column;
  align-items: center;
  gap: 8px;
  width: 8px;
  margin: 0 16px 0 6px;
}
.vsplit span {
  width: 2px;
  background-color: #ddd;
}
.above { flex: 3; }
.below { flex: 2; }
.vsplit svg {
  width: 8px;
  height: 14px;
  margin-left: 4px;
  color: #999;
}
.hsplit {
  display: flex;
  align-items: center;
  gap: 8px;
  height: 9px;
  margin-top: 5px;
}
.hsplit span {
  height: 1px;
  background-color: #ddd;
}
.before { flex: 106; }
.after { flex: 100; }
.hsplit svg {
  width: 16px;
  height: 9px;
  color: #888;
}

.info {
  width: 330px;
  padding-right: 17px;
}
.info-head {
  display: flex;
  justify-content: space-between;
  height: 46px;
  padding-top: 3px;
  margin-right: 6px;
  border-bottom: 1px solid #ddd;
}
.info-head .bare {
  height: 20px;
  margin-right: -5px;
}
.info h2 {
  font-size: 14px;
  font-weight: 500;
  line-height: 20px;
  color: #666;
}
.info dl {
  display: grid;
  grid-template-columns: 149px 1fr;
  gap: 2px 10px;
  padding-top: 8px;
  line-height: 20px;
}
.info dt {
  text-align: right;
  font-weight: 500;
  color: #000;
}

/* lower part */
.lower-nav {
  display: flex;
  align-items: center;
  margin-top: 7px;
}
.group {
  gap: 8px;
  margin: 0 13px 0 16px;
  font-weight: 500;
}
.lower-tabs {
  flex: 1;
  box-shadow: inset 0 -1px #d5d5d5;
}
.lower-tabs a {
  height: 33px;
  padding: 0 9px;
}
.lower-tools {
  height: 27px;
  margin-top: 11px;
  padding: 0 5px 0 10px;
}
.lower-tools > .bare {
  margin-right: 21px;
}
.lower-tools .add {
  gap: 12px;
}
.lower-tools .off {
  margin-right: 26px;
  color: #aaa;
}
.lower-tools .tag {
  gap: 7px;
  margin-right: 16px;
}
.lower-tools .more {
  margin-right: 6px;
}
.lower-tools .attach {
  gap: 8px;
  padding: 0 14px 0 13px;
}
.i-clip {
  width: 14px;
  height: 22px;
}
.hours-wrap {
  position: relative;
  margin-top: 11px;
  overflow: visible;
}
.hours-wrap .handle {
  top: -7px;
}
.bottom-scroll {
  margin-top: auto;
  margin-bottom: 13px;
}

/* right rail */
.side {
  width: 55px;
  display: flex;
  flex-direction: column;
  margin: 1px 0 -1px;
  border-radius: 8px;
  overflow: hidden;
  background-color: #fff;
  box-shadow: 0 2px 10px rgba(0, 0, 0, 0.14);
}
.side-icons {
  flex: 1;
  display: flex;
  flex-direction: column;
  justify-content: center;
  padding-top: 240px;
  color: #444;
}
.side-icons a {
  display: flex;
  align-items: center;
  justify-content: center;
  height: 61px;
}
.side-icons svg {
  stroke-width: 1.3;
}
.side-icons .blue-line {
  stroke: #0a85cc;
}
.side-art {
  width: 55px;
  height: 229px;
  stroke: none;
}
.side-art .dash {
  stroke: #9bcdea;
  stroke-dasharray: 3 5;
}
```
